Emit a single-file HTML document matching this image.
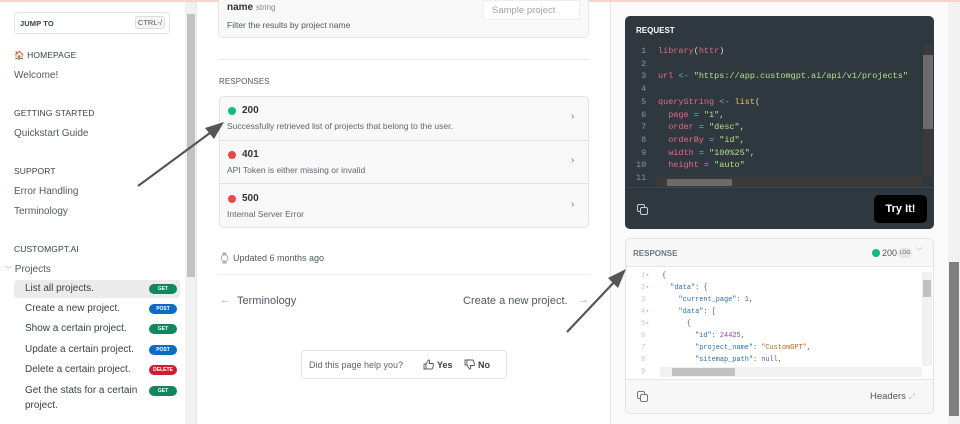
<!DOCTYPE html>
<html><head><meta charset="utf-8"><style>
*{box-sizing:border-box;margin:0;padding:0}
body{width:960px;height:424px;overflow:hidden;position:relative;background:#fff;font-family:"Liberation Sans",sans-serif;color:#384248}
.a{position:absolute}
.topline{left:0;top:0;width:960px;height:2px;background:#f3d3cc}
.sb{left:0;top:2px;width:197px;height:422px;background:#fff;border-right:1px solid #e6e6e6}
.sec{font-size:8.5px;color:#384248;letter-spacing:.1px}
.lnk{font-size:10px;color:#4f5a62}
.it{left:14px;width:166px;height:18px;font-size:10px;color:#384248;padding-left:11px;line-height:18px;border-radius:3px}
.badge{position:absolute;right:3px;top:4px;width:28px;height:10px;border-radius:5px;color:#fff;font-size:5px;font-weight:bold;text-align:center;line-height:10px}
.g{background:#12875e}.p{background:#0d6bc4}.d{background:#cc1e31}
.mono{font-family:"Liberation Mono",monospace}
.code{font-size:8.5px;line-height:12.7px;white-space:pre}
</style></head><body>
<div class="a topline"></div>
<div class="a sb">
 <div class="a" style="left:14px;top:10px;width:156px;height:22px;border:1px solid #e3e3e3;border-radius:4px"></div>
 <div class="a sec" style="left:20px;top:17px;font-size:7.5px;font-weight:bold">JUMP TO</div>
 <div class="a" style="left:135px;top:14px;width:30px;height:13px;border:1px solid #ddd;border-radius:3px;background:#f4f4f4;font-size:7.5px;color:#555;text-align:center;line-height:12px">CTRL-/</div>
 <div class="a sec" style="left:14px;top:48px">🏠 HOMEPAGE</div>
 <div class="a lnk" style="left:14px;top:68px">Welcome!</div>
 <div class="a sec" style="left:14px;top:106px">GETTING STARTED</div>
 <div class="a lnk" style="left:14px;top:126px">Quickstart Guide</div>
 <div class="a sec" style="left:14px;top:164px">SUPPORT</div>
 <div class="a lnk" style="left:14px;top:184px">Error Handling</div>
 <div class="a lnk" style="left:14px;top:204px">Terminology</div>
 <div class="a sec" style="left:14px;top:242px">CUSTOMGPT.AI</div>
 <div class="a lnk" style="left:5px;top:262px"><span style="font-size:7px;color:#999">﹀</span> Projects</div>
 <div class="a it" style="top:278px;background:#ebebeb">List all projects.<span class="badge g">GET</span></div>
 <div class="a it" style="top:298px">Create a new project.<span class="badge p">POST</span></div>
 <div class="a it" style="top:318px">Show a certain project.<span class="badge g">GET</span></div>
 <div class="a it" style="top:339px">Update a certain project.<span class="badge p">POST</span></div>
 <div class="a it" style="top:359px">Delete a certain project.<span class="badge d">DELETE</span></div>
 <div class="a it" style="top:380px">Get the stats for a certain<span class="badge g">GET</span></div>
 <div class="a lnk" style="left:25px;top:398px;color:#384248">project.</div>
 <div class="a" style="left:185px;top:0;width:11px;height:422px;background:#f1f1f1"></div>
 <div class="a" style="left:187px;top:12px;width:8px;height:263px;background:#c1c1c1"></div>
</div>
<!-- main -->
<div class="a" style="left:218px;top:-6px;width:371px;height:44px;background:#f8f8f8;border:1px solid #e6e6e6;border-radius:5px"></div>
<div class="a" style="left:227px;top:2px;font-size:10px;font-weight:bold;color:#333">name <span style="font-weight:normal;font-size:8px;color:#888">string</span></div>
<div class="a" style="left:227px;top:20px;font-size:8.5px;color:#4f5a62">Filter the results by project name</div>
<div class="a" style="left:483px;top:0;width:97px;height:20px;background:#fff;border:1px solid #eee;font-size:9.5px;color:#9aa3aa;padding:4px 8px">Sample project</div>
<div class="a" style="left:218px;top:59px;width:371px;height:1px;background:#ececec"></div>
<div class="a sec" style="left:219px;top:77px;font-size:8px;color:#4f5a62">RESPONSES</div>
<div class="a" style="left:219px;top:96px;width:370px;height:132px;background:#f8f8f8;border:1px solid #e3e3e3;border-radius:5px"></div>
<div class="a" style="left:220px;top:140px;width:368px;height:1px;background:#e3e3e3"></div>
<div class="a" style="left:220px;top:183px;width:368px;height:1px;background:#e3e3e3"></div>
<div class="a" style="left:228px;top:107px;width:8px;height:8px;border-radius:50%;background:#12b981"></div>
<div class="a" style="left:242px;top:105px;font-size:10px;font-weight:bold;color:#333">200</div>
<div class="a" style="left:227px;top:121px;font-size:8.5px;color:#5b6770">Successfully retrieved list of projects that belong to the user.</div>
<div class="a" style="left:228px;top:151px;width:8px;height:8px;border-radius:50%;background:#e5484d"></div>
<div class="a" style="left:242px;top:149px;font-size:10px;font-weight:bold;color:#333">401</div>
<div class="a" style="left:227px;top:165px;font-size:8.5px;color:#5b6770">API Token is either missing or invalid</div>
<div class="a" style="left:228px;top:195px;width:8px;height:8px;border-radius:50%;background:#e5484d"></div>
<div class="a" style="left:242px;top:193px;font-size:10px;font-weight:bold;color:#333">500</div>
<div class="a" style="left:227px;top:209px;font-size:8.5px;color:#5b6770">Internal Server Error</div>
<div class="a" style="left:571px;top:111px;font-size:10px;color:#777">›</div>
<div class="a" style="left:571px;top:155px;font-size:10px;color:#777">›</div>
<div class="a" style="left:571px;top:199px;font-size:10px;color:#777">›</div>
<svg class="a" style="left:220px;top:252px" width="9" height="12"><circle cx="4.5" cy="6" r="3.3" fill="none" stroke="#aaa" stroke-width="1"/><rect x="2.5" y="0.5" width="4" height="2" fill="#aaa"/><rect x="2.5" y="9.5" width="4" height="2" fill="#aaa"/></svg>
<div class="a" style="left:233px;top:253px;font-size:9px;color:#4f5a62">Updated 6 months ago</div>
<div class="a" style="left:218px;top:274px;width:371px;height:1px;background:#ececec"></div>
<div class="a" style="left:220px;top:294px;font-size:11px;color:#aaa">←</div>
<div class="a" style="left:237px;top:295px;font-size:11px;color:#4f5a62">Terminology</div>
<div class="a" style="left:463px;top:295px;font-size:11px;color:#4f5a62">Create a new project.</div>
<div class="a" style="left:578px;top:294px;font-size:11px;color:#aaa">→</div>
<div class="a" style="left:301px;top:350px;width:206px;height:29px;border:1px solid #e6e6e6;border-radius:4px"></div>
<div class="a" style="left:309px;top:360px;font-size:9px;color:#5b6770">Did this page help you?</div>
<svg class="a" style="left:423px;top:359px" width="11" height="11"><path d="M1 5h2v5H1zM3 5l2.5-4c1 0 1.5.7 1.2 1.8L6.3 4.5H9.5c.8 0 1.2.6 1 1.3l-1 3.5c-.2.5-.5.7-1 .7H3" fill="none" stroke="#555" stroke-width=".9"/></svg>
<div class="a" style="left:437px;top:360px;font-size:9px;font-weight:bold;color:#384248">Yes</div>
<svg class="a" style="left:464px;top:359px" width="11" height="11"><path d="M1 1h2v5H1zM3 6l2.5 4c1 0 1.5-.7 1.2-1.8L6.3 6.5H9.5c.8 0 1.2-.6 1-1.3l-1-3.5C9.3 1.2 9 1 8.5 1H3" fill="none" stroke="#555" stroke-width=".9"/></svg>
<div class="a" style="left:478px;top:360px;font-size:9px;font-weight:bold;color:#384248">No</div>
<!-- right -->
<div class="a" style="left:610px;top:2px;width:337px;height:422px;background:#fafafa;border-left:1px solid #e6e6e6"></div>
<div class="a" style="left:948px;top:2px;width:12px;height:422px;background:#f1f1f1"></div>
<div class="a" style="left:949px;top:262px;width:10px;height:154px;background:#7f7f7f"></div>
<div class="a" style="left:625px;top:16px;width:309px;height:213px;background:#2f383e;border-radius:5px"></div>
<div class="a" style="left:636px;top:26px;font-size:8px;font-weight:bold;color:#fff">REQUEST</div>
<div class="a mono code" style="left:636px;top:45px;color:#8a949b;text-align:right">1
2
3
4
5
6
7
8
9
10
11</div>
<div class="a mono code" style="left:658px;top:45px;color:#e06c88">library<span style="color:#ddd">(</span>httr<span style="color:#ddd">)</span>

url <span style="color:#5fb3d9">&lt;-</span> <span style="color:#b5e08a">"https://app.customgpt.ai/api/v1/projects"</span>

queryString <span style="color:#5fb3d9">&lt;-</span> <span style="color:#e8c15b">list</span><span style="color:#ddd">(</span>
  page <span style="color:#5fb3d9">=</span> <span style="color:#b5e08a">"1"</span><span style="color:#ddd">,</span>
  order <span style="color:#5fb3d9">=</span> <span style="color:#b5e08a">"desc"</span><span style="color:#ddd">,</span>
  orderBy <span style="color:#5fb3d9">=</span> <span style="color:#b5e08a">"id"</span><span style="color:#ddd">,</span>
  width <span style="color:#5fb3d9">=</span> <span style="color:#b5e08a">"100%25"</span><span style="color:#ddd">,</span>
  height <span style="color:#5fb3d9">=</span> <span style="color:#b5e08a">"auto"</span></div>
<div class="a" style="left:923px;top:44px;width:10px;height:132px;background:#3a3a3a"></div>
<div class="a" style="left:923px;top:55px;width:10px;height:74px;background:#6b6b6b"></div>
<div class="a" style="left:656px;top:176px;width:267px;height:11px;background:#3a3a3a"></div>
<div class="a" style="left:667px;top:179px;width:65px;height:7px;background:#6b6b6b"></div>
<div class="a" style="left:625px;top:187px;width:309px;height:1px;background:#3b454c"></div>
<div class="a" style="left:637px;top:204px;width:8px;height:8px;border:1.3px solid #ccc;border-radius:2px"></div>
<div class="a" style="left:640px;top:207px;width:8px;height:8px;border:1.3px solid #ccc;border-radius:2px;background:#2f383e"></div>
<div class="a" style="left:874px;top:195px;width:53px;height:28px;background:#000;border-radius:5px;color:#fff;font-size:11px;font-weight:bold;text-align:center;line-height:28px">Try It!</div>
<div class="a" style="left:625px;top:238px;width:309px;height:176px;background:#f7f7f7;border:1px solid #e3e3e3;border-radius:5px"></div>
<div class="a" style="left:633px;top:249px;font-size:8px;font-weight:bold;color:#6b7780">RESPONSE</div>
<div class="a" style="left:872px;top:249px;width:8px;height:8px;border-radius:50%;background:#12b981"></div>
<div class="a" style="left:882px;top:248px;font-size:9px;color:#555">200</div>
<div class="a" style="left:898px;top:248px;width:14px;height:10px;border-radius:5px;background:#e4e4e4;font-size:5px;color:#666;text-align:center;line-height:10px">LOG</div>
<div class="a" style="left:915px;top:246px;font-size:8px;color:#bbb">﹀</div>
<div class="a" style="left:626px;top:266px;width:307px;height:114px;background:#fff;border-top:1px solid #e6e6e6;border-bottom:1px solid #e6e6e6"></div>
<div class="a mono code" style="left:641px;top:270px;font-size:7px;line-height:12px;color:#c4c4c4">1▾
2▾
3
4▾
5▾
6
7
8
9</div>
<div class="a mono code" style="left:662px;top:270px;font-size:6.9px;line-height:12px;color:#555">{
  <span style="color:#2a6fb0">"data"</span>: {
    <span style="color:#2a6fb0">"current_page"</span>: <span style="color:#8a3fb3">1</span>,
    <span style="color:#2a6fb0">"data"</span>: [
      {
        <span style="color:#2a6fb0">"id"</span>: <span style="color:#8a3fb3">24425</span>,
        <span style="color:#2a6fb0">"project_name"</span>: <span style="color:#c2641b">"CustomGPT"</span>,
        <span style="color:#2a6fb0">"sitemap_path"</span>: <span style="color:#8a3fb3">null</span>,</div>
<div class="a" style="left:922px;top:272px;width:10px;height:94px;background:#f1f1f1"></div>
<div class="a" style="left:923px;top:280px;width:8px;height:17px;background:#c1c1c1"></div>
<div class="a" style="left:660px;top:367px;width:262px;height:10px;background:#f1f1f1"></div>
<div class="a" style="left:672px;top:368px;width:63px;height:8px;background:#c1c1c1"></div>
<div class="a" style="left:637px;top:391px;width:8px;height:8px;border:1.3px solid #777;border-radius:2px"></div>
<div class="a" style="left:640px;top:394px;width:8px;height:8px;border:1.3px solid #777;border-radius:2px;background:#f7f7f7"></div>
<div class="a" style="left:870px;top:391px;font-size:9.5px;color:#555">Headers <span style="color:#bbb;font-size:8px">⤢</span></div>
<!-- arrows -->
<svg class="a" style="left:0;top:0" width="960" height="424">
<line x1="138" y1="186" x2="214" y2="130" stroke="#555" stroke-width="2.2"/>
<polygon points="224,122 205,128 214,139" fill="#555"/>
<line x1="567" y1="332" x2="618" y2="278" stroke="#555" stroke-width="2.2"/>
<polygon points="626,269 608,278 618,288" fill="#555"/>
</svg>
</body></html>
